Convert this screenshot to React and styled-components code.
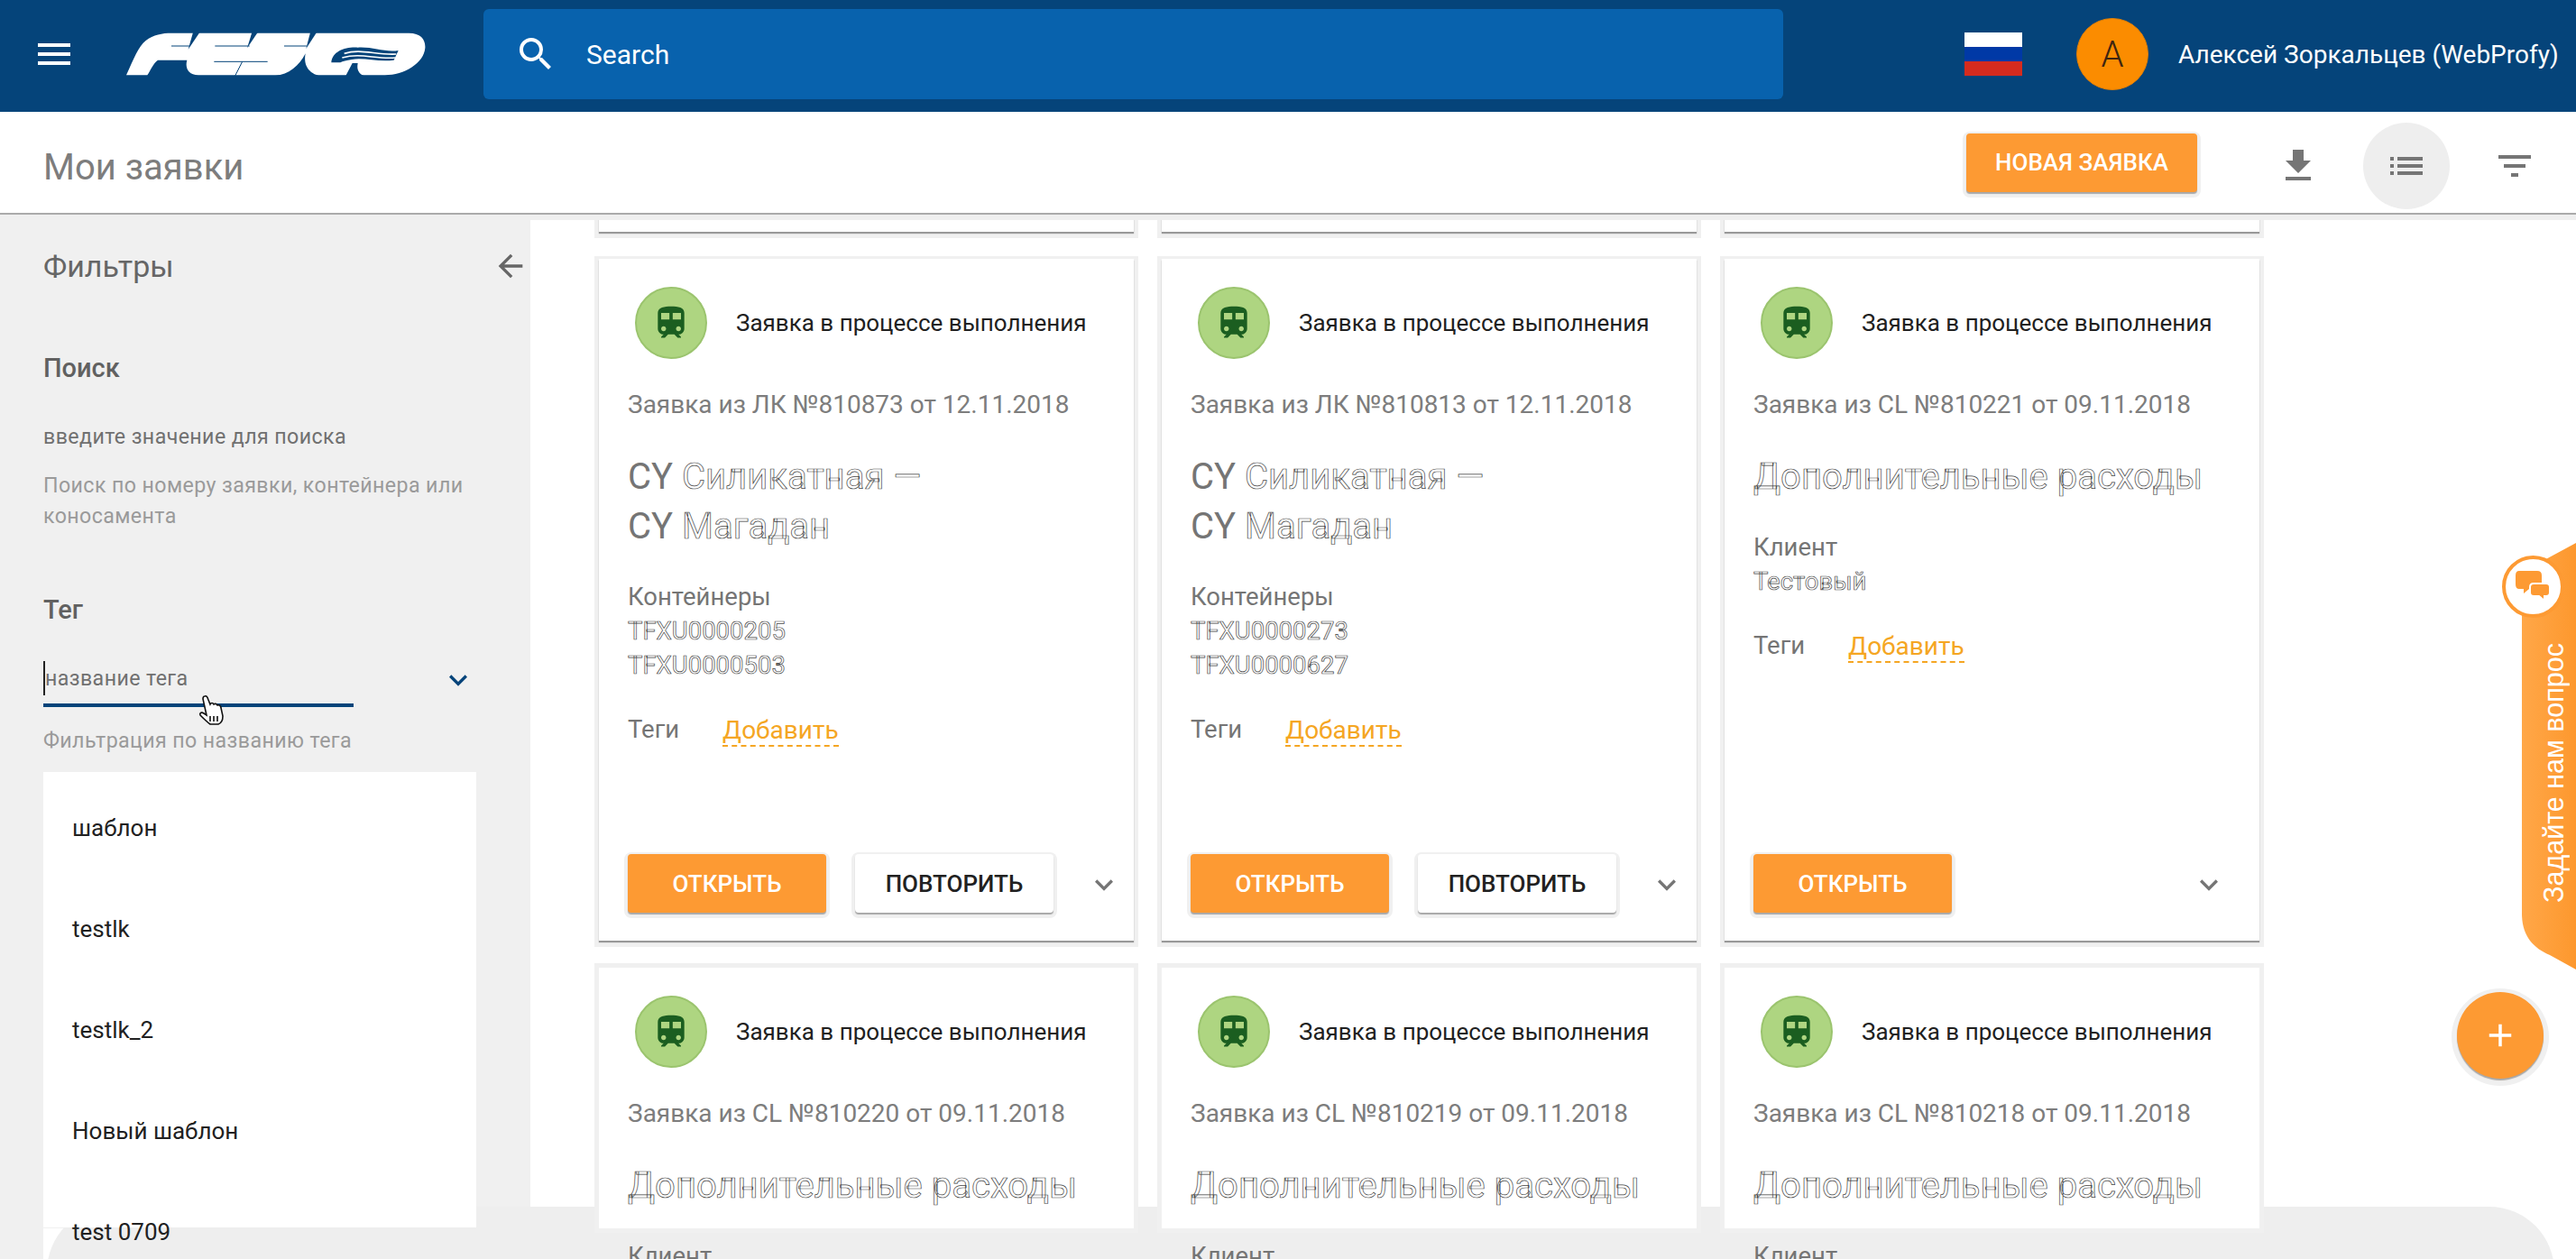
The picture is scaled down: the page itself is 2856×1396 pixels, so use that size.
import React from 'react';
import styled, { createGlobalStyle } from 'styled-components';
import {
  MdMenu, MdSearch, MdFileDownload, MdList, MdFilterList,
  MdArrowBack, MdKeyboardArrowDown, MdTrain, MdAdd
} from 'react-icons/md';

const GlobalStyle = createGlobalStyle`
  html, body { margin: 0; padding: 0; background: #fff; }
  body { font-family: Roboto, "Noto Sans", sans-serif; }
  * { box-sizing: border-box; }
`;

const ORANGE = '#fd9a33';
const NAVY = '#05447a';

const Page = styled.div`
  position: relative;
  width: 2856px;
  height: 1396px;
  overflow: hidden;
  display: flex;
  flex-direction: column;
`;

const TopBar = styled.header`
  height: 124px;
  flex: none;
  background: ${NAVY};
  display: flex;
  align-items: center;
  padding: 0 0 4px 36px;
  color: #fff;
`;

const MenuIcon = styled(MdMenu)`
  font-size: 48px;
  flex: none;
`;

const Logo = styled.svg`
  width: 370px;
  height: 80px;
  margin-left: 36px;
  flex: none;
`;

const SearchBox = styled.div`
  width: 1441px;
  height: 100px;
  margin-left: 46px;
  background: #0862ad;
  border-radius: 6px;
  display: flex;
  align-items: center;
  padding-left: 34px;
  font-size: 30px;
  flex: none;
`;

const SearchText = styled.span`
  margin-left: 32px;
`;

const Flag = styled.div`
  width: 64px;
  height: 48px;
  margin-left: 201px;
  flex: none;
  background: linear-gradient(#fff 0 16px, #0039a6 16px 32px, #d52b1e 32px);
`;

const Avatar = styled.div`
  width: 80px;
  height: 80px;
  margin-left: 60px;
  border-radius: 50%;
  background: #fb8c00;
  border: 1px solid #e07f05;
  color: #3e2510;
  font-size: 40px;
  font-weight: 300;
  display: flex;
  align-items: center;
  justify-content: center;
  flex: none;
`;

const UserName = styled.span`
  margin-left: 33px;
  font-size: 28px;
  white-space: nowrap;
`;

const SubBar = styled.div`
  position: relative;
  z-index: 3;
  height: 114px;
  flex: none;
  background: #fff;
  border-bottom: 2px solid #aaa;
  box-shadow: 0 6px 0 #efefef;
  display: flex;
  align-items: center;
  padding: 0 20px 0 48px;
`;

const PageTitle = styled.h1`
  margin: 10px 0 0;
  font-size: 40px;
  font-weight: 400;
  color: #7d7d7d;
`;

const Button = styled.button`
  width: ${p => p.$width || 220}px;
  height: ${p => p.$height || 65}px;
  flex: none;
  border: 0;
  border-radius: 4px;
  background: ${p => (p.$plain ? '#fff' : ORANGE)};
  color: ${p => (p.$plain ? '#212121' : '#fff')};
  font-family: Roboto, sans-serif;
  font-size: 26px;
  font-weight: 500;
  padding: 0;
  box-shadow: 0 2px 1px #a8a8a8, 0 2px 0 4px #f0f0f0;
`;

const NewButton = styled(Button)`
  margin-left: auto;
`;

const IconButton = styled.div`
  width: 96px;
  height: 96px;
  margin-left: ${p => p.$gap || 24}px;
  margin-top: 8px;
  border-radius: 50%;
  background: ${p => (p.$active ? '#eee' : 'transparent')};
  color: #757575;
  font-size: 48px;
  display: flex;
  align-items: center;
  justify-content: center;
  flex: none;
`;

const Body = styled.div`
  flex: 1;
  display: flex;
  min-height: 0;
`;

const Sidebar = styled.aside`
  width: 588px;
  flex: none;
  background: #f0f0f0;
  padding: 38px 0 0 48px;
`;

const SideHead = styled.div`
  display: flex;
  align-items: center;
  justify-content: space-between;
  height: 38px;
  width: 538px;
  font-size: 34px;
  color: #666;
`;

const BackIcon = styled(MdArrowBack)`
  font-size: 40px;
  color: #666;
`;

const SideLabel = styled.div`
  margin-top: ${p => p.$top}px;
  line-height: 38px;
  font-size: 29px;
  font-weight: 500;
  color: #616161;
`;

const SideValue = styled.div`
  margin-top: 42px;
  line-height: 30px;
  font-size: 23.2px;
  letter-spacing: .4px;
  color: #707070;
`;

const SideHint = styled.div`
  margin-top: ${p => p.$top || 22}px;
  width: 480px;
  line-height: 34px;
  font-size: 23.2px;
  letter-spacing: .4px;
  color: #9a9a9a;
`;

const TagField = styled.div`
  margin-top: 38px;
  width: 480px;
  height: 38px;
  display: flex;
  align-items: center;
  justify-content: space-between;
  font-size: 23.2px;
  letter-spacing: .4px;
  color: #707070;
  border-left: 2px solid #222;
`;

const TagChevron = styled(MdKeyboardArrowDown)`
  font-size: 40px;
  color: ${NAVY};
  margin-top: 4px;
`;

const Underline = styled.div`
  position: relative;
  width: 344px;
  height: 4px;
  margin-top: 9px;
  background: ${NAVY};
`;

const HandCursor = styled.svg`
  position: absolute;
  left: 172px;
  top: -10px;
  width: 30px;
  height: 34px;
`;

const TagList = styled.ul`
  position: relative;
  z-index: 2;
  list-style: none;
  margin: 18px 0 0;
  padding: 6px 0 0;
  width: 480px;
  height: 505px;
  background: #fff;
`;

const TagItem = styled.li`
  height: 112px;
  padding-left: 32px;
  display: flex;
  align-items: center;
  font-size: 26px;
  color: #212121;
`;

const Content = styled.main`
  flex: 1;
  background: #fff;
  padding-left: 76px;
`;

const CardGrid = styled.div`
  display: grid;
  grid-template-columns: repeat(3, 593px);
  column-gap: 31px;
  row-gap: 30px;
  align-content: start;
`;

const Card = styled.article`
  position: relative;
  z-index: 2;
  height: ${p => p.$height || 756}px;
  background: #fff;
  display: flex;
  flex-direction: column;
  padding: 31px 32px 31px;
  box-shadow: 0 2px 1px #999, 0 2px 0 5px #f0f0f0;
`;

const CutCard = styled(Card)`
  box-shadow: 0 0 0 5px #f0f0f0;
`;

const StubCard = styled(Card)`
  height: 19px;
  padding: 0;
`;

const StatusRow = styled.div`
  display: flex;
  align-items: center;
  padding-left: 8px;
`;

const StatusDot = styled.div`
  width: 80px;
  height: 80px;
  flex: none;
  border-radius: 50%;
  background: #aed581;
  border: 2px solid #9bc46e;
  color: #1b5e20;
  font-size: 44px;
  display: flex;
  align-items: center;
  justify-content: center;
`;

const StatusText = styled.span`
  margin-left: 32px;
  font-size: 26px;
  color: #212121;
  white-space: nowrap;
`;

const RequestLine = styled.div`
  margin-top: 31px;
  line-height: 40px;
  font-size: 28px;
  color: #7d7d7d;
  white-space: nowrap;
`;

const RouteTitle = styled.div`
  margin-top: 32px;
  line-height: 55px;
  font-size: 40px;
  color: #757575;
`;

const Faded = styled.span`
  color: #fff;
  -webkit-text-stroke: .7px #444;
`;

const InfoBlock = styled.div`
  margin-top: 32px;
  line-height: 38px;
  font-size: 27.5px;
  color: #757575;
`;

const TagsRow = styled.div`
  margin-top: 31px;
  height: 40px;
  display: flex;
  align-items: center;
  font-size: 27.5px;
  color: #757575;
`;

const AddTag = styled.span`
  margin-left: 48px;
  margin-top: 6px;
  color: #f5a623;
  font-size: 28px;
  line-height: 32px;
  border-bottom: 2px dashed #f5a623;
`;

const ButtonRow = styled.div`
  margin-top: auto;
  display: flex;
  gap: 32px;
`;

const MoreChevron = styled(MdKeyboardArrowDown)`
  font-size: 40px;
  color: #757575;
  margin: 14px 0 0 ${p => (p.$far ? 233 : 4)}px;
  flex: none;
`;

const BottomSheet = styled.div`
  position: absolute;
  z-index: 1;
  left: 52px;
  right: 24px;
  top: 1338px;
  height: 120px;
  background: #eee;
  border-radius: 72px 72px 0 0;
`;

const SheetGap = styled.div`
  position: absolute;
  z-index: 0;
  left: 48px;
  bottom: 0;
  width: 60px;
  height: 34px;
  background: #fff;
`;

const QuestionTab = styled.div`
  position: absolute;
  z-index: 4;
  right: 0;
  top: 602px;
  width: 82px;
  height: 473px;
`;

const TabShape = styled.svg`
  position: absolute;
  right: 0;
  top: 0;
  width: 60px;
  height: 473px;
`;

const TabBadge = styled.div`
  position: absolute;
  left: 0;
  top: 14px;
  width: 69px;
  height: 69px;
  border-radius: 50%;
  background: #fff;
  border: 4px solid ${ORANGE};
  display: flex;
  align-items: center;
  justify-content: center;
`;

const TabText = styled.span`
  position: absolute;
  left: 36px;
  top: 113px;
  height: 286px;
  line-height: 42px;
  writing-mode: vertical-rl;
  transform: rotate(180deg);
  font-family: "Liberation Sans", Arial, sans-serif;
  font-size: 30.5px;
  color: #fff;
  white-space: nowrap;
`;

const Fab = styled.div`
  position: absolute;
  z-index: 4;
  left: 2724px;
  top: 1100px;
  width: 96px;
  height: 96px;
  border-radius: 50%;
  background: ${ORANGE};
  color: #fff;
  font-size: 42px;
  display: flex;
  align-items: center;
  justify-content: center;
  box-shadow: 0 2px 1px #a8a8a8, 0 2px 0 6px #f0f0f0;
`;

const Status = () => (
  <StatusRow>
    <StatusDot><MdTrain /></StatusDot>
    <StatusText>Заявка в процессе выполнения</StatusText>
  </StatusRow>
);

const routeCards = [
  { line: 'Заявка из ЛК №810873 от 12.11.2018', boxes: ['TFXU0000205', 'TFXU0000503'] },
  { line: 'Заявка из ЛК №810813 от 12.11.2018', boxes: ['TFXU0000273', 'TFXU0000627'] }
];

const lowerCards = [
  'Заявка из CL №810220 от 09.11.2018',
  'Заявка из CL №810219 от 09.11.2018',
  'Заявка из CL №810218 от 09.11.2018'
];

const tags = ['шаблон', 'testlk', 'testlk_2', 'Новый шаблон', 'test 0709'];

const App = () => (
  <Page>
    <GlobalStyle />
    <TopBar>
      <MenuIcon />
      <Logo viewBox="0 0 1110 240">
        <path fill="#fff" d="M60 190 C85 135 100 95 125 75 C150 55 180 50 210 50 L1000 50 C1040 50 1056 72 1054 100 C1050 150 985 190 920 190 L300 190 C265 190 255 165 262 140 L165 140 C150 150 140 175 130 190 Z" />
        <g fill={NAVY}>
          <path d="M282 48 H304 L266 104 Z" />
          <path d="M478 48 H497 L462 100 Z" />
          <path d="M672 48 H693 L658 102 Z" />
          <path d="M556 192 C600 188 635 160 656 118 C650 150 660 180 700 192 Z" />
          <path d="M790 192 L812 150 L830 150 C826 170 832 185 850 192 Z" />
          <path d="M965 108 C920 115 880 95 830 98 C790 95 745 110 742 148 L772 148 C780 142 792 142 810 138 C850 130 900 148 950 140 Z" />
        </g>
        <g fill="none" stroke={NAVY} strokeWidth="3">
          <path d="M210 93 H272 M355 93 H470 M585 93 H660 M352 145 H530" />
          <path d="M446 145 L422 192" />
        </g>
        <g fill="none" stroke="#fff" strokeWidth="5">
          <path d="M785 118 C840 100 890 124 958 120" />
          <path d="M778 132 C840 114 890 138 955 132" />
        </g>
      </Logo>
      <SearchBox>
        <MdSearch size={48} />
        <SearchText>Search</SearchText>
      </SearchBox>
      <Flag />
      <Avatar>А</Avatar>
      <UserName>Алексей Зоркальцев (WebProfy)</UserName>
    </TopBar>

    <SubBar>
      <PageTitle>Мои заявки</PageTitle>
      <NewButton $width={256}>НОВАЯ ЗАЯВКА</NewButton>
      <IconButton $gap={64}><MdFileDownload /></IconButton>
      <IconButton $active><MdList /></IconButton>
      <IconButton><MdFilterList /></IconButton>
    </SubBar>

    <Body>
      <Sidebar>
        <SideHead>Фильтры<BackIcon /></SideHead>
        <SideLabel $top={75}>Поиск</SideLabel>
        <SideValue>введите значение для поиска</SideValue>
        <SideHint>Поиск по номеру заявки, контейнера или коносамента</SideHint>
        <SideLabel $top={68}>Тег</SideLabel>
        <TagField>название тега<TagChevron /></TagField>
        <Underline>
          <HandCursor viewBox="0 0 30 34">
            <path fill="#fff" stroke="#111" strokeWidth="1.6" d="M7 2 C9 1 10 3 11 6 L13 11 C14 9 16 9 17 11 C18 10 20 10 21 12 C23 11 25 13 25 15 L27 24 C27 29 25 32 22 33 L13 33 C10 31 6 27 2 23 C1 21 3 19 6 21 L9 23 L5 5 C5 3 6 2 7 2 Z" />
            <path stroke="#111" strokeWidth="1.6" d="M13 24 V30 M17 24 V30 M21 24 V30" />
          </HandCursor>
        </Underline>
        <SideHint $top={20}>Фильтрация по названию тега</SideHint>
        <TagList>
          {tags.map(tag => <TagItem key={tag}>{tag}</TagItem>)}
        </TagList>
      </Sidebar>

      <Content>
        <CardGrid>
          <StubCard />
          <StubCard />
          <StubCard />

          {routeCards.map(card => (
            <Card key={card.line}>
              <Status />
              <RequestLine>{card.line}</RequestLine>
              <RouteTitle>
                CY <Faded>Силикатная —</Faded><br />
                CY <Faded>Магадан</Faded>
              </RouteTitle>
              <InfoBlock>
                Контейнеры<br />
                {card.boxes.map(box => <React.Fragment key={box}><Faded>{box}</Faded><br /></React.Fragment>)}
              </InfoBlock>
              <TagsRow>Теги<AddTag>Добавить</AddTag></TagsRow>
              <ButtonRow>
                <Button>ОТКРЫТЬ</Button>
                <Button $plain>ПОВТОРИТЬ</Button>
                <MoreChevron />
              </ButtonRow>
            </Card>
          ))}

          <Card>
            <Status />
            <RequestLine>Заявка из CL №810221 от 09.11.2018</RequestLine>
            <RouteTitle><Faded>Дополнительные расходы</Faded></RouteTitle>
            <InfoBlock>
              Клиент<br />
              <Faded>Тестовый</Faded>
            </InfoBlock>
            <TagsRow>Теги<AddTag>Добавить</AddTag></TagsRow>
            <ButtonRow>
              <Button>ОТКРЫТЬ</Button>
              <MoreChevron $far />
            </ButtonRow>
          </Card>

          {lowerCards.map(line => (
            <CutCard key={line} $height={289}>
              <Status />
              <RequestLine>{line}</RequestLine>
              <RouteTitle><Faded>Дополнительные расходы</Faded></RouteTitle>
              <InfoBlock>Клиент</InfoBlock>
            </CutCard>
          ))}
        </CardGrid>
      </Content>
    </Body>

    <SheetGap />
    <BottomSheet />

    <QuestionTab>
      <TabShape viewBox="0 0 60 473">
        <defs>
          <linearGradient id="tabFill" x1="0" x2="1" y1="0" y2="0">
            <stop offset="0" stopColor="#ffa748" />
            <stop offset="1" stopColor="#fd982e" />
          </linearGradient>
        </defs>
        <path fill="url(#tabFill)" d="M60 0 L10 27 Q0 35 0 50 L0 411 C0 435 12 449 31 457 L60 473 Z" />
      </TabShape>
      <TabBadge>
        <svg width="40" height="36" viewBox="0 0 40 36">
          <path fill={ORANGE} d="M4 0 H24 Q29 0 29 5 V15 Q29 20 24 20 H15 L9 25 V20 H4 Q0 20 0 15 V5 Q0 0 4 0 Z" />
          <path fill={ORANGE} stroke="#fff" strokeWidth="2" d="M20 14 H34 Q38 14 38 18 V24 Q38 28 34 28 H32 V33 L26 28 H20 Q16 28 16 24 V18 Q16 14 20 14 Z" />
        </svg>
      </TabBadge>
      <TabText>Задайте нам вопрос</TabText>
    </QuestionTab>

    <Fab><MdAdd /></Fab>
  </Page>
);

export default App;
